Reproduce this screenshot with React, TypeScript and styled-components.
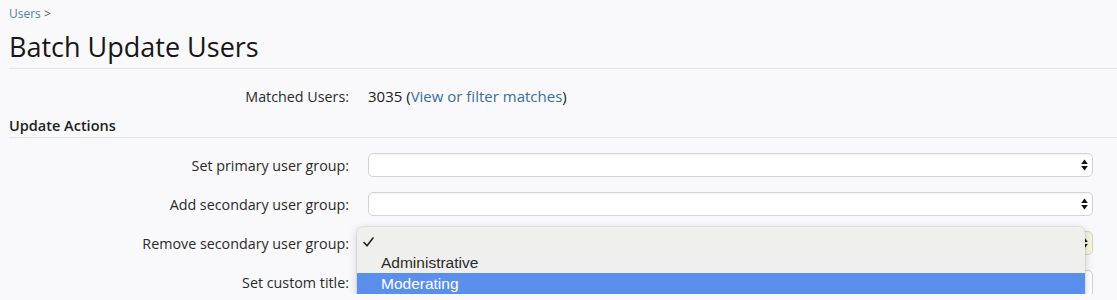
import React from 'react';
import styled, { createGlobalStyle } from 'styled-components';

const GlobalStyle = createGlobalStyle`
  html, body {
    margin: 0;
    padding: 0;
    background: #f9f9fb;
    font-family: 'Open Sans', 'DejaVu Sans', sans-serif;
    color: #222;
    overflow: hidden;
  }
`;

const actions = [
  { label: 'Set primary user group:', kind: 'select' },
  { label: 'Add secondary user group:', kind: 'select' },
  { label: 'Remove secondary user group:', kind: 'select', open: true },
  { label: 'Set custom title:', kind: 'text' },
];

const groups = ['Administrative', 'Moderating', 'Original Group'];

const Arrows = () => (
  <svg width="7" height="12" viewBox="0 0 7 12">
    <path d="M3.5 0.5 L6.8 5 L0.2 5 Z" fill="#111" />
    <path d="M3.5 11.5 L6.8 7 L0.2 7 Z" fill="#111" />
  </svg>
);

const Check = () => (
  <svg width="11" height="10" viewBox="0 0 11 10">
    <path d="M1 5.5 L4 8.8 L10 1" fill="none" stroke="#222" strokeWidth="1.6" strokeLinecap="round" strokeLinejoin="round" />
  </svg>
);

export default function App() {
  return (
    <Page>
      <GlobalStyle />
      <Breadcrumb>
        <BreadLink>Users</BreadLink> &gt;
      </Breadcrumb>
      <Title>Batch Update Users</Title>

      <InfoRow>
        <Label>Matched Users:</Label>
        <Value>
          3035 (<Link>View or filter matches</Link>)
        </Value>
      </InfoRow>

      <SectionHeader>Update Actions</SectionHeader>

      <Rows>
        {actions.map((a) => (
          <Row key={a.label}>
            <Label>{a.label}</Label>
            <Field>
              {a.kind === 'select' ? (
                <SelectBox $focused={a.open}>
                  <ArrowSlot>
                    <Arrows />
                  </ArrowSlot>
                </SelectBox>
              ) : (
                <TextBox />
              )}
              {a.open && (
                <Popup>
                  <PopupItem>
                    <CheckSlot>
                      <Check />
                    </CheckSlot>
                  </PopupItem>
                  {groups.map((g) => (
                    <PopupItem key={g} $active={g === 'Moderating'}>
                      <CheckSlot />
                      {g}
                    </PopupItem>
                  ))}
                </Popup>
              )}
            </Field>
          </Row>
        ))}
      </Rows>
    </Page>
  );
}

const Page = styled.div`
  padding-left: 9px;
  padding-top: 8px;
`;

const Breadcrumb = styled.div`
  font-size: 12px;
  line-height: 12px;
  color: #555;
`;

const BreadLink = styled.span`
  color: #4f7ea8;
`;

const Title = styled.h1`
  margin: 11px 0 0;
  font-size: 27px;
  font-weight: 400;
  line-height: 32px;
  color: #161616;
  padding-bottom: 5px;
  border-bottom: 1px solid #dfe7ec;
`;

const Label = styled.div`
  width: 340px;
  flex: none;
  text-align: right;
  font-size: 14.3px;
  color: #2a2a2a;
`;

const InfoRow = styled.div`
  display: flex;
  align-items: center;
  gap: 19px;
  margin-top: 17px;
  height: 20px;
`;

const Value = styled.div`
  font-size: 15px;
  color: #222;
`;

const Link = styled.span`
  color: #3a6e9c;
`;

const SectionHeader = styled.h3`
  margin: 10px 0 0;
  font-size: 14.5px;
  font-weight: 600;
  line-height: 20px;
  color: #1e1e1e;
  padding-bottom: 1px;
  border-bottom: 1px solid #dfe7ec;
`;

const Rows = styled.div`
  display: flex;
  flex-direction: column;
  gap: 15px;
  padding-top: 15px;
  padding-right: 24px;
`;

const Row = styled.div`
  display: flex;
  align-items: center;
  gap: 19px;
  height: 24px;
`;

const Field = styled.div`
  position: relative;
  flex: 1;
  height: 24px;
`;

const SelectBox = styled.div<{ $focused?: boolean }>`
  box-sizing: border-box;
  height: 24px;
  border: 1px solid #d3d3d3;
  border-radius: 5px;
  background: ${(p) => (p.$focused ? '#f7f7dc' : '#fff')};
  box-shadow: inset 0 1px 1px rgba(0, 0, 0, 0.04);
  display: flex;
  align-items: center;
  justify-content: flex-end;
`;

const ArrowSlot = styled.span`
  display: flex;
  width: 7px;
  margin-right: 4px;
`;

const TextBox = styled.div`
  box-sizing: border-box;
  height: 30px;
  border: 1px solid #d3d3d3;
  border-radius: 5px;
  background: #fff;
`;

const Popup = styled.div`
  position: absolute;
  left: -11px;
  right: 8px;
  top: -4px;
  padding-top: 4px;
  background: #efefed;
  border-radius: 6px;
  box-shadow: 0 2px 10px rgba(0, 0, 0, 0.18), 0 0 0 1px rgba(0, 0, 0, 0.06);
  z-index: 5;
  font-family: 'Liberation Sans', 'Noto Sans', sans-serif;
`;

const PopupItem = styled.div<{ $active?: boolean }>`
  display: flex;
  align-items: center;
  height: 21px;
  font-size: 15.5px;
  color: ${(p) => (p.$active ? '#fff' : '#2a2a2a')};
  background: ${(p) => (p.$active ? '#5b8fec' : 'transparent')};
`;

const CheckSlot = styled.span`
  display: flex;
  width: 24px;
  padding-left: 6px;
  box-sizing: border-box;
`;
